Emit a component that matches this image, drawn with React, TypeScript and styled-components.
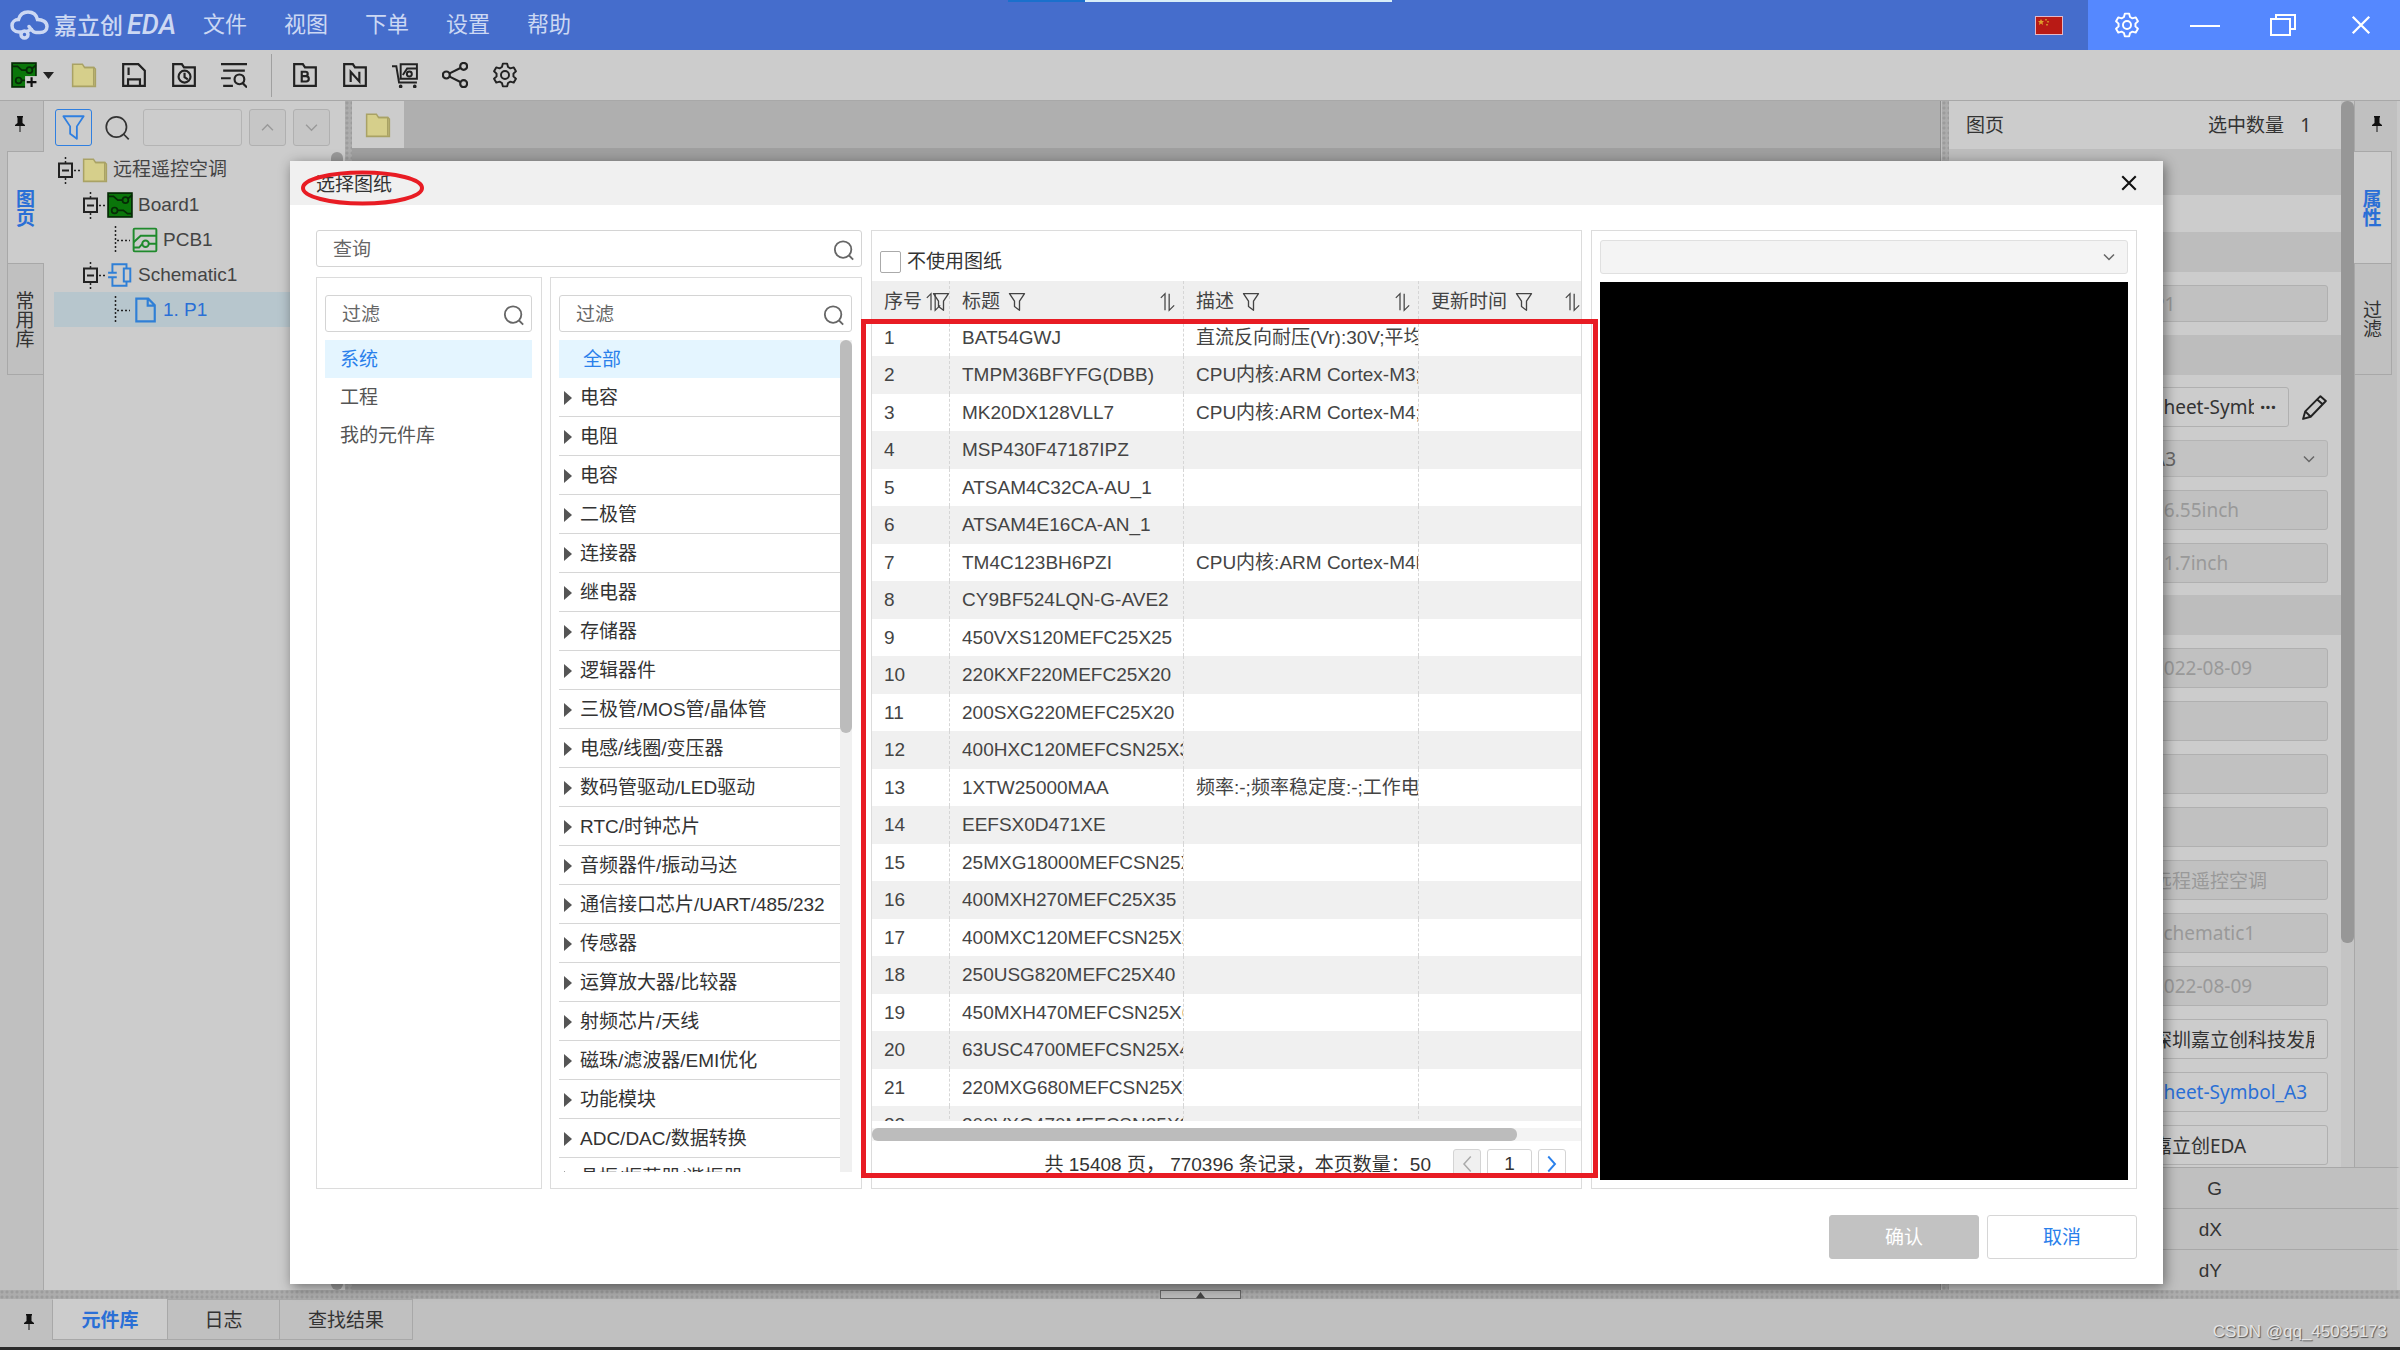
import React from "react";
import styled, { createGlobalStyle, css } from "styled-components";

const SANS = '"Liberation Sans", "Noto Sans CJK SC", sans-serif';
const UI = '"Noto Sans", "Noto Sans CJK SC", sans-serif';
const BLUE = "#2a6fd6";
const LINE = "#a8a8a8";

const GlobalStyle = createGlobalStyle`
  * { box-sizing: border-box; }
  html, body { margin: 0; height: 100%; overflow: hidden; }
  #root { height: 100%; }
  body { font-family: ${SANS}; font-size: 19px; line-height: 24px; color: #333; background: #c0c0c0; }
  button, input, select { font: inherit; color: inherit; margin: 0; padding: 0; border: 0; background: none; border-radius: 0; }
  button { cursor: pointer; }
  svg { display: block; flex: none; }
`;

/* ---------- shell ---------- */
const Shell = styled.div`
  position: relative;
  display: flex;
  flex-direction: column;
  height: 100vh;
`;
const TitleBar = styled.header`
  position: relative;
  display: flex;
  height: 50px;
  background: #456dcc;
  color: #ccd8f3;
`;
const Brand = styled.div`
  display: flex;
  align-items: center;
  gap: 5px;
  padding-left: 10px;
  width: 203px;
  font-size: 23px;
  font-weight: 500;
  font-family: "Noto Sans CJK SC", sans-serif;
`;
const BrandLatin = styled.span`
  font: italic 500 27px Roboto, sans-serif;
  margin-left: 4px;
`;
const Menu = styled.nav`
  display: flex;
  align-items: center;
  gap: 37px;
  flex: 1;
  font-size: 22px;
`;
const WindowControls = styled.div`
  display: flex;
  width: 312px;
  background: #5588ff;
  color: #fff;
`;
const WindowButton = styled.button`
  flex: 1;
  display: grid;
  place-items: center;
`;
const LangButton = styled.button`
  display: grid;
  place-items: center;
  width: 28px;
  margin-right: 25px;
`;
const TopStrip = styled.div`
  position: absolute;
  top: 0;
  left: 42%;
  right: 42%;
  height: 2px;
  display: flex;
`;
const StripPart = styled.span<{ $grow: number; $color: string }>`
  flex: ${(p) => p.$grow};
  background: ${(p) => p.$color};
`;
const ToolBar = styled.div`
  display: flex;
  align-items: center;
  height: 51px;
  padding-left: 11px;
  background: #ccc;
  border-bottom: 1px solid ${LINE};
`;
const ToolButton = styled.button<{ $wide?: boolean }>`
  display: flex;
  align-items: center;
  gap: 6px;
  width: ${(p) => (p.$wide ? 60 : 50)}px;
  height: 40px;
  color: #222;
`;
const ToolDivider = styled.span`
  width: 1px;
  height: 43px;
  margin-right: 20px;
  background: #a0a0a0;
`;
const Main = styled.div`
  display: flex;
  flex: 1;
  min-height: 0;
`;

/* ---------- side strips ---------- */
const Strip = styled.div<{ $side: "left" | "right" }>`
  display: flex;
  flex-direction: column;
  background: #c0c0c0;
  ${(p) =>
    p.$side === "left"
      ? css`width: 44px; border-right: 1px solid ${LINE};`
      : css`width: 46px; border-left: 1px solid ${LINE}; border-right: 3px solid #c9c9c9;`}
`;
const PinButton = styled.button<{ $w?: number }>`
  display: grid;
  place-items: center;
  height: 50px;
  width: ${(p) => p.$w ?? 40}px;
  padding-bottom: 4px;
`;
const SideTab = styled.button<{ $active?: boolean; $side: "left" | "right" }>`
  display: flex;
  align-items: center;
  justify-content: center;
  writing-mode: vertical-rl;
  height: 112px;
  padding-right: 5px;
  border: 1px solid ${LINE};
  border-bottom-width: 0;
  line-height: 19px;
  ${(p) =>
    p.$side === "left"
      ? css`margin: 0 -1px 0 7px; border-right-width: ${p.$active ? 0 : 1}px;`
      : css`margin: 0 5px 0 -1px; border-left-width: ${p.$active ? 0 : 1}px;`}
  ${(p) => p.$active && css`background: #ccc; color: ${BLUE}; font-weight: 700;`}
  &:last-of-type { border-bottom-width: 1px; }
`;

/* ---------- project tree ---------- */
const Project = styled.aside`
  width: 301px;
  background: #ccc;
  display: flex;
  flex-direction: column;
`;
const ProjectTools = styled.div`
  display: flex;
  align-items: center;
  gap: 7px;
  padding: 8px 15px 6px 11px;
`;
const SquareButton = styled.button<{ $active?: boolean }>`
  display: grid;
  place-items: center;
  width: 37px;
  height: 37px;
  border: 1px solid ${(p) => (p.$active ? "#2f7fe0" : "#b0b0b0")};
  border-radius: 3px;
  color: ${(p) => (p.$active ? "#2f7fe0" : "#999")};
  background: ${(p) => (p.$active ? "none" : "#c6c6c6")};
`;
const FindIcon = styled.span`
  padding: 0 5px;
`;
const FindInput = styled.input`
  flex: 1;
  min-width: 0;
  height: 37px;
  border: 1px solid #b4b4b4;
  border-radius: 3px;
`;
const TreeWrap = styled.div`
  display: flex;
  flex: 1;
  min-height: 0;
`;
const Tree = styled.ul`
  list-style: none;
  margin: 0;
  padding: 0 0 0 10px;
  flex: 1;
`;
const TreeRow = styled.li<{ $level: number; $selected?: boolean }>`
  display: flex;
  align-items: center;
  height: 35px;
  padding-left: ${(p) => 4 + p.$level * 25}px;
  color: ${(p) => (p.$selected ? BLUE : "#444")};
  background: ${(p) => (p.$selected ? "#b7c6cd" : "none")};
`;
const TreeLabel = styled.span`
  margin-left: 5px;
`;
const Thumb = styled.span<{ $color: string }>`
  display: block;
  background: ${(p) => p.$color};
  border-radius: 6px;
`;
const TreeThumb = styled(Thumb)`
  width: 12px;
  margin-right: 2px;
`;
const Splitter = styled.div<{ $vertical?: boolean }>`
  background-color: #acacac;
  background-image: radial-gradient(circle at 2px 2px, #9c9c9c 1px, transparent 2px);
  background-size: 5px 5px;
  ${(p) => (p.$vertical ? css`width: 7px;` : css`height: 9px;`)}
  flex: none;
`;

/* ---------- canvas ---------- */
const Canvas = styled.section`
  flex: 1;
  background: #9f9f9f;
  border-right: 1px solid #8d8d8d;
  margin-right: 1px;
`;
const CanvasTabs = styled.div`
  height: 47px;
  background: #afafaf;
  display: flex;
`;
const CanvasTab = styled.button`
  width: 52px;
  background: #ccc;
  display: grid;
  place-items: center;
`;

/* ---------- properties ---------- */
const RightArea = styled.aside`
  width: 451px;
  display: flex;
  flex-direction: column;
  font-family: ${UI};
`;
const RightTop = styled.div`
  display: flex;
  flex: 1;
  min-height: 0;
`;
const Props = styled.div`
  flex: 1;
  min-width: 0;
  background: #ccc;
  overflow: hidden;
`;
const PropsHead = styled.div`
  display: flex;
  align-items: center;
  gap: 16px;
  height: 48px;
  padding: 0 30px 0 17px;
`;
const PropsTitle = styled.span`
  flex: 1;
`;
const Band = styled.div<{ $h: number; $light?: boolean }>`
  height: ${(p) => p.$h}px;
  background: ${(p) => (p.$light ? "#ccc" : "#bdbdbd")};
`;
const Fields = styled.div<{ $pad: number }>`
  display: grid;
  grid-template-columns: minmax(0, 1fr);
  gap: 13px;
  padding: ${(p) => p.$pad}px 13px ${(p) => p.$pad}px 190px;
`;
const fieldBox = css`
  width: 100%;
  border: 1px solid #b0b0b0;
  border-radius: 3px;
`;
const Field = styled.input<{ $h?: number; $tone?: "link" | "edit" }>`
  ${fieldBox}
  height: ${(p) => p.$h ?? 40}px;
  padding: 0 13px;
  background: ${(p) => (p.$tone ? "#ccc" : "#c1c1c1")};
  color: ${(p) => (p.$tone === "link" ? BLUE : p.$tone ? "#333" : "#999")};
`;
const SymbolRow = styled.div`
  display: flex;
  align-items: center;
  gap: 13px;
`;
const SymbolBox = styled.div`
  ${fieldBox}
  flex: 1;
  min-width: 0;
  display: flex;
  height: 40px;
`;
const SymbolInput = styled.input`
  flex: 1;
  min-width: 0;
  margin-left: 13px;
`;
const MoreButton = styled.button`
  width: 34px;
  padding-right: 6px;
  font-weight: 700;
`;
const SelectWrap = styled.label<{ $h: number; $bg: string; $line: string }>`
  display: flex;
  align-items: center;
  height: ${(p) => p.$h}px;
  padding-right: 12px;
  border: 1px solid ${(p) => p.$line};
  border-radius: 3px;
  background: ${(p) => p.$bg};
  color: #666;
`;
const Select = styled.select`
  appearance: none;
  flex: 1;
  min-width: 0;
  height: 100%;
  padding-left: 13px;
  outline: none;
`;
const PropsScroll = styled.div`
  width: 13px;
  background: #c4c4c4;
`;
const PropsThumb = styled(Thumb)`
  height: 79%;
`;
const Status = styled.dl`
  margin: 0;
  font-family: ${SANS};
`;
const StatusRow = styled.div`
  display: flex;
  align-items: center;
  height: 41px;
  padding-top: 1px;
  border-top: 1px solid ${LINE};
  border-right: 3px solid #c9c9c9;
`;
const StatusName = styled.dt`
  width: 273px;
  text-align: right;
`;

/* ---------- bottom ---------- */
const BottomHandle = styled.div`
  display: grid;
  place-items: center;
  width: 81px;
  height: 9px;
  margin: 0 auto;
  background: #bbb;
  border: 1px solid #666;
`;
const BottomBar = styled.footer`
  display: flex;
  align-items: flex-start;
  height: 51px;
  background: #c0c0c0;
  border-bottom: 3px solid #2b2b2b;
`;
const BottomPin = styled.div`
  display: flex;
  justify-content: flex-end;
  width: 52px;
  padding-right: 3px;
  height: 44px;
`;
const BottomTab = styled.button<{ $active?: boolean; $w: number }>`
  width: ${(p) => p.$w}px;
  height: 41px;
  padding-top: 3px;
  border: 1px solid ${LINE};
  border-right-width: 0;
  &:last-of-type { border-right-width: 1px; }
  ${(p) => p.$active && css`background: #ccc; color: ${BLUE}; font-weight: 700; border-top-color: #ccc;`}
`;
const Watermark = styled.span`
  margin: 21px 13px 0 auto;
  font-size: 17px;
  color: #e4e4e4;
  text-shadow: 1px 1px 1px #555;
`;

/* ---------- dialog ---------- */
const Overlay = styled.div`
  position: absolute;
  inset: 0;
  display: flex;
  padding: 161px 237px 66px 290px;
`;
const Dialog = styled.section`
  display: flex;
  flex-direction: column;
  flex: 1;
  min-width: 0;
  background: #fff;
  box-shadow: 2px 3px 12px rgba(0, 0, 0, 0.45);
`;
const DialogHead = styled.div`
  display: flex;
  align-items: center;
  justify-content: space-between;
  height: 44px;
  flex: none;
  padding: 0 20px 0 26px;
  background: #f0f0f0;
`;
const DialogTitle = styled.h2`
  position: relative;
  margin: 0;
  padding-top: 4px;
  font-size: 19px;
  font-weight: 400;
`;
const TitleMark = styled.svg`
  position: absolute;
  left: -15px;
  top: 1px;
`;
const CloseButton = styled.button`
  display: grid;
  place-items: center;
  width: 28px;
  height: 28px;
  color: #111;
`;
const DialogBody = styled.div`
  display: grid;
  grid-template-columns: 546fr 711fr 546fr;
  gap: 9px;
  flex: 1;
  min-height: 0;
  padding: 25px 26px 0;
`;
const Column = styled.div`
  display: flex;
  flex-direction: column;
  gap: 10px;
  min-width: 0;
  min-height: 0;
`;
const SearchBox = styled.label`
  display: flex;
  align-items: center;
  flex: none;
  height: 37px;
  padding: 2px 6px 0 16px;
  border: 1px solid #d4d4d4;
  border-radius: 3px;
  color: #666;
`;
const SearchInput = styled.input`
  flex: 1;
  min-width: 0;
  outline: none;
  &::placeholder { color: #666; opacity: 1; }
`;
const Libraries = styled.div`
  display: grid;
  grid-template-columns: 226fr 312fr;
  gap: 8px;
  flex: 1;
  min-height: 0;
`;
const Panel = styled.div<{ $pad?: string }>`
  position: relative;
  display: flex;
  flex-direction: column;
  min-width: 0;
  min-height: 0;
  padding: ${(p) => p.$pad ?? "0"};
  border: 1px solid #dcdcdc;
`;
const PlainList = styled.ul`
  list-style: none;
  margin: 8px 0 0;
  padding: 0;
`;
const LibraryItem = styled.li<{ $active?: boolean }>`
  height: 38px;
  padding-left: 15px;
  line-height: 39px;
  color: ${(p) => (p.$active ? "#2a80eb" : "#555")};
  background: ${(p) => (p.$active ? "#e4f5ff" : "none")};
`;
const CategoryArea = styled.div`
  display: flex;
  flex: 1;
  min-height: 0;
  margin-top: 8px;
  overflow: hidden;
`;
const CategoryList = styled.ul`
  list-style: none;
  margin: 0;
  padding: 0;
  flex: 1;
  min-width: 0;
`;
const AllItem = styled(LibraryItem)`
  padding-left: 24px;
`;
const CategoryItem = styled.li`
  display: flex;
  align-items: center;
  gap: 8px;
  height: 39px;
  padding: 2px 0 0 5px;
  border-bottom: 1px solid #d6d6d6;
  white-space: nowrap;
`;
const CategoryScroll = styled.div`
  width: 12px;
  background: #f0f0f0;
`;
const CategoryThumb = styled(Thumb)`
  height: 393px;
`;
const NoSheet = styled.label`
  display: flex;
  align-items: center;
  gap: 6px;
  height: 50px;
  padding: 11px 0 0 8px;
  flex: none;
`;
const CheckBox = styled.input`
  appearance: none;
  width: 21px;
  height: 22px;
  background: #fff;
  border: 1px solid #aaa;
  border-radius: 2px;
`;
const TableArea = styled.div`
  flex: 1;
  min-height: 0;
  overflow: hidden;
`;
const Table = styled.table`
  width: 100%;
  table-layout: fixed;
  border-collapse: separate;
  border-spacing: 0;
  color: #444;
`;
const Th = styled.th<{ $w?: number }>`
  width: ${(p) => (p.$w ? `${p.$w}px` : "auto")};
  height: 38px;
  padding: 4px 0 0;
  font-weight: 400;
  background: #efefef;
  & + & { border-left: 1px dashed #d6d6d6; }
`;
const ThInner = styled.div<{ $tight?: boolean }>`
  display: flex;
  align-items: center;
  gap: ${(p) => (p.$tight ? 4 : 7)}px;
  padding-left: 12px;
  padding-right: ${(p) => (p.$tight ? 0 : 8)}px;
  white-space: nowrap;
`;
const SortSlot = styled.span<{ $edge?: boolean }>`
  margin-left: auto;
  margin-right: ${(p) => (p.$edge ? -7 : 0)}px;
`;
const OverlapFilter = styled.span`
  margin-left: -14px;
`;
const Td = styled.td`
  padding: 0 0 0 12px;
  overflow: hidden;
  white-space: nowrap;
  & + & { border-left: 1px dashed #d6d6d6; }
`;
const Tr = styled.tr`
  height: 37px;
  &:nth-child(even) { height: 38px; background: #f0f0f0; }
`;
const TableScroll = styled.div`
  flex: none;
  height: 13px;
  margin-top: 7px;
  background: #f3f3f3;
`;
const TableThumb = styled(Thumb)`
  width: 91%;
  height: 13px;
`;
const Pager = styled.div`
  display: flex;
  align-items: flex-start;
  justify-content: flex-end;
  gap: 6px;
  flex: none;
  height: 35px;
  margin-bottom: 12px;
  padding: 8px 15px 0 0;
  overflow: hidden;
  color: #333;
`;
const PagerText = styled.span`
  padding: 4px 16px 0 0;
`;
const PageButton = styled.button<{ $off?: boolean }>`
  display: grid;
  place-items: center;
  width: 28px;
  height: 30px;
  border: 1px solid #d4d4d4;
  border-radius: 3px;
  color: ${(p) => (p.$off ? "#aaa" : "#2a80eb")};
  background: ${(p) => (p.$off ? "#f0f0f0" : "#fff")};
`;
const PageInput = styled.input`
  width: 45px;
  height: 30px;
  border: 1px solid #d4d4d4;
  border-radius: 3px;
  text-align: center;
`;
const ResultsMark = styled.div`
  position: absolute;
  top: 88px;
  bottom: 10px;
  left: -11px;
  right: -17px;
  border: 5px solid #e81c24;
  pointer-events: none;
  z-index: 1;
`;
const Preview = styled.div`
  flex: 1;
  margin-top: 8px;
  background: #000;
`;
const DialogFoot = styled.div`
  display: flex;
  justify-content: flex-end;
  gap: 8px;
  flex: none;
  padding: 26px 26px 25px;
`;
const FootButton = styled.button<{ $off?: boolean }>`
  width: 150px;
  height: 44px;
  padding-top: 2px;
  border: 1px solid ${(p) => (p.$off ? "#c2c2c2" : "#d6d6d6")};
  border-radius: 3px;
  background: ${(p) => (p.$off ? "#c2c2c2" : "#fff")};
  color: ${(p) => (p.$off ? "#fff" : "#2a80eb")};
`;

/* ---------- icons ---------- */
type IconProps = { size?: number; w?: number; sw?: number; color?: string; children: React.ReactNode };
const Icon = ({ size = 26, w, sw = 2, color = "currentColor", children }: IconProps) => (
  <svg width={w ?? size} height={size} viewBox={`0 0 ${w ? (24 * w) / size : 24} 24`} fill="none" stroke={color} strokeWidth={sw} aria-hidden="true">
    {children}
  </svg>
);
const Search = ({ size = 22, sw = 2 }: { size?: number; sw?: number }) => (
  <Icon size={size} sw={sw}><circle cx="11" cy="11.500" r="9" /><path d="M17.500 18L22 22.500" /></Icon>
);
const FolderFill = ({ size = 26 }: { size?: number }) => (
  <Icon size={size} sw={1.4} color="#a9a265">
    <path d="M1.500 22.500V2h9l2 3H21l1.500 1.500v16z" fill="#d6cf8b" />
    <path d="M12.500 5H21v17" />
  </Icon>
);
const FolderLine = ({ children }: { children: React.ReactNode }) => (
  <Icon><path d="M2 22V2h8l2 3h10v17z" />{children}</Icon>
);
const Gear = ({ size = 26 }: { size?: number }) => (
  <Icon size={size} sw={1.800}>
    <path strokeLinejoin="round" d="M10 1.500h4l.8 3.100 2.200 1.300 3.100-.9 2 3.500-2.300 2.200v2.600l2.300 2.200-2 3.500-3.100-.9-2.200 1.300-.8 3.100h-4l-.8-3.100L7 18.100l-3.100.9-2-3.500 2.300-2.200v-2.600L1.900 8.500l2-3.500 3.100.9 2.200-1.300z" />
    <circle cx="12" cy="12" r="3.700" />
  </Icon>
);
const BoardArt = ({ plus }: { plus?: boolean }) => (
  <Icon sw={1.600} color="#062b06">
    <rect x="1" y="1" width="22" height="22" fill="#0a760a" />
    <path d="M1 4h5l4 3.500h4M23 20h-4l-4-3h-5M19.500 6L23 3" />
    <circle cx="17" cy="7.500" r="2.700" />
    <circle cx="7" cy="17" r="2.700" />
    {plus && <><rect x="13" y="13" width="12" height="12" fill="#ccc" stroke="none" /><path d="M19 14v9M14.500 18.500h9" strokeWidth="2" stroke="#111" /></>}
  </Icon>
);
const Pin = () => (
  <svg width="12" height="16" viewBox="0 0 12 16" aria-hidden="true">
    <path d="M3 0h6v1.500H8.500V7L11 9v1H1V9l2.500-2V1.500H3zM5.500 10h1v6h-1z" fill="#111" />
  </svg>
);
const Filter = ({ size = 20, sw = 2 }: { size?: number; sw?: number }) => (
  <Icon size={size} sw={sw}><path d="M3 2h18l-6 9v11l-6-4.500V11z" strokeLinejoin="round" /></Icon>
);
const Sort = () => (
  <Icon size={20} w={15} sw={1.500}><path d="M1 7L6 2v20M11 2v20l6-6" /></Icon>
);
const Chevron = ({ dir = "down", size = 12, sw = 3 }: { dir?: string; size?: number; sw?: number }) => {
  const d: Record<string, string> = { down: "M2 7l10 10L22 7", up: "M2 17L12 7l10 10", left: "M17 2L8 12l9 10", right: "M7 2l9 10-9 10" };
  return <Icon size={size} sw={sw}><path d={d[dir]} /></Icon>;
};
const Expander = () => (
  <svg width="24" height="34" viewBox="0 0 24 34" fill="none" stroke="#222" aria-hidden="true">
    <path d="M7.500 4v6M7.500 25v6M16 17.500h7" strokeDasharray="2 2" strokeWidth="1.500" />
    <rect x="1" y="10.500" width="13" height="13.500" strokeWidth="2" />
    <path d="M4 17.500h7" strokeWidth="2" />
  </svg>
);
const Tee = () => (
  <svg width="24" height="34" viewBox="0 0 24 34" fill="none" stroke="#222" strokeWidth="1.500" strokeDasharray="2 2" aria-hidden="true">
    <path d="M7.500 3v27M9 17.500h13" />
  </svg>
);
const PcbIcon = () => (
  <Icon color="#1f8a2c" sw={1.800}>
    <rect x="1.500" y="1.500" width="21" height="21" rx="1" />
    <path d="M1.500 14L8 8h14.500M15.500 15.500h7M1.500 19h5l3-3.500" /><circle cx="12.500" cy="15.500" r="3" />
  </Icon>
);
const SchematicIcon = () => (
  <Icon color="#2f7fd6" sw={1.800}>
    <path d="M5 8V2h13v4M5 16v6h13v-4M1 10h8M1 14h8M5 8v2M5 14v2" /><rect x="15.500" y="6" width="6" height="12" />
  </Icon>
);
const PageIcon = () => (
  <Icon color="#2f7fd6" sw={2}><path d="M4 1.500h11l6 6v15H4zM14.500 1.500V8H21" /></Icon>
);

/* ---------- data ---------- */
const categories = [
  "电容", "电阻", "电容", "二极管", "连接器", "继电器", "存储器", "逻辑器件", "三极管/MOS管/晶体管", "电感/线圈/变压器",
  "数码管驱动/LED驱动", "RTC/时钟芯片", "音频器件/振动马达", "通信接口芯片/UART/485/232", "传感器", "运算放大器/比较器",
  "射频芯片/天线", "磁珠/滤波器/EMI优化", "功能模块", "ADC/DAC/数据转换", "晶振/振荡器/谐振器",
];
const parts: [string, string][] = [
  ["BAT54GWJ", "直流反向耐压(Vr):30V;平均整流电流"], ["TMPM36BFYFG(DBB)", "CPU内核:ARM Cortex-M3;"],
  ["MK20DX128VLL7", "CPU内核:ARM Cortex-M4;"], ["MSP430F47187IPZ", ""], ["ATSAM4C32CA-AU_1", ""], ["ATSAM4E16CA-AN_1", ""],
  ["TM4C123BH6PZI", "CPU内核:ARM Cortex-M4F"], ["CY9BF524LQN-G-AVE2", ""], ["450VXS120MEFC25X25", ""], ["220KXF220MEFC25X20", ""],
  ["200SXG220MEFC25X20", ""], ["400HXC120MEFCSN25X30", ""], ["1XTW25000MAA", "频率:-;频率稳定度:-;工作电压"], ["EEFSX0D471XE", ""],
  ["25MXG18000MEFCSN25X50", ""], ["400MXH270MEFC25X35", ""], ["400MXC120MEFCSN25X25", ""], ["250USG820MEFC25X40", ""],
  ["450MXH470MEFCSN25X60", ""], ["63USC4700MEFCSN25X40", ""], ["220MXG680MEFCSN25X35", ""], ["200VXG470MEFCSN25X25", ""],
];
const sheetFields: { name: string; value: string; tone?: "link" | "edit" }[] = [
  { name: "创建日期", value: "2022-08-09" }, { name: "绘制", value: "" }, { name: "审阅", value: "" }, { name: "版本", value: "" },
  { name: "工程名", value: "远程遥控空调" }, { name: "原理图名", value: "Schematic1" }, { name: "更新日期", value: "2022-08-09" },
  { name: "公司", value: "深圳嘉立创科技发展有限公司", tone: "edit" }, { name: "图纸", value: "Sheet-Symbol_A3", tone: "link" },
  { name: "品牌", value: "嘉立创EDA", tone: "edit" },
];

const TopBar = () => (
  <TitleBar>
    <Brand>
      <svg width="39" height="30" viewBox="0 0 39 30" fill="none" stroke="currentColor" strokeWidth="3.500" strokeLinecap="round" aria-hidden="true">
        <path d="M11 22H9C4 22 2 18.500 2 15.500 2 12 5 9.500 8.500 9.500 10 4 14 2 18 2c5 0 8.500 3 9.500 7.500 5 0 9.500 2.500 9.500 7 0 4-3 6-7 6h-4c-3 0-5-3-7-6" />
        <circle cx="14.500" cy="24.500" r="3.500" /><path d="M16.500 21.500l5-2" />
      </svg>
      <span>嘉立创<BrandLatin>EDA</BrandLatin></span>
    </Brand>
    <Menu>{["文件", "视图", "下单", "设置", "帮助"].map((m) => <button key={m}>{m}</button>)}</Menu>
    <LangButton aria-label="语言">
      <svg width="28" height="19" viewBox="0 0 28 19" aria-hidden="true">
        <rect x=".5" y=".5" width="27" height="18" fill="#b81a15" stroke="#e3b9c8" />
        <path d="M6 3l1 2h2L7.500 6.500 8 9 6 7.500 4 9l.5-2.500L3 5h2z" fill="#e0a02c" />
        <path d="M10 3h2v1.500h-2zM12 5h2v1.500h-2zM11 8h2v1.500h-2z" fill="#cf8425" />
      </svg>
    </LangButton>
    <WindowControls>
      <WindowButton aria-label="设置"><Gear /></WindowButton>
      <WindowButton aria-label="最小化"><svg width="30" height="3"><rect width="30" height="2" y="1" fill="#fff" /></svg></WindowButton>
      <WindowButton aria-label="还原">
        <svg width="28" height="24" viewBox="0 0 28 24" fill="none" stroke="#fff" strokeWidth="2"><rect x="2" y="6" width="19" height="16" /><path d="M7 6V2h19v14h-5" /></svg>
      </WindowButton>
      <WindowButton aria-label="关闭"><Icon size={22} sw={2.500}><path d="M3 3l18 18M21 3L3 21" /></Icon></WindowButton>
    </WindowControls>
    <TopStrip><StripPart $grow={76} $color="#1a70cc" /><StripPart $grow={302} $color="#d8eef8" /></TopStrip>
  </TitleBar>
);

const Tools = () => (
  <ToolBar>
    <ToolButton $wide aria-label="新建"><BoardArt plus /><svg width="11" height="7"><path d="M0 0h11L5.500 7z" fill="#222" /></svg></ToolButton>
    <ToolButton aria-label="打开"><FolderFill /></ToolButton>
    <ToolButton aria-label="保存"><Icon><path d="M2 22V2h14l6 6v14zM7 5v7M6.500 22v-6h11v6" /></Icon></ToolButton>
    <ToolButton aria-label="最近"><FolderLine><circle cx="12.500" cy="13.500" r="5.500" /><path d="M12.500 10v4l3 2" /></FolderLine></ToolButton>
    <ToolButton aria-label="查找"><Icon><path d="M0 2h24M2 8h20M0 15h9M2 22h9" /><circle cx="17" cy="16" r="4.500" /><path d="M20 19.500l4 4" /></Icon></ToolButton>
    <ToolDivider />
    <ToolButton aria-label="BOM"><FolderLine><path d="M9 9v9h4a2.500 2.500 0 000-5H9h3.500a2 2 0 000-4z" /></FolderLine></ToolButton>
    <ToolButton aria-label="网表"><FolderLine><path d="M8 18.500V9l8 9V9" /></FolderLine></ToolButton>
    <ToolButton aria-label="下单"><Icon sw={1.800}><path d="M0 4h4l2.500 15H23M7 15.500h16V2H8v13M10 12l4-6h9" /><circle cx="16" cy="11" r="2.300" /><circle cx="8" cy="22.500" r=".8" /><circle cx="21" cy="22.500" r=".8" /></Icon></ToolButton>
    <ToolButton aria-label="分享"><Icon><circle cx="4" cy="12" r="3.200" /><circle cx="20" cy="4" r="3.200" /><circle cx="20" cy="20" r="3.200" /><path d="M7 10.500l10-5M7 13.500l10 5" /></Icon></ToolButton>
    <ToolButton aria-label="选项"><Gear /></ToolButton>
  </ToolBar>
);

const ProjectPanel = () => (
  <Project>
    <ProjectTools>
      <SquareButton $active aria-label="筛选"><Filter size={27} sw={1.600} /></SquareButton>
      <FindIcon><Search size={27} sw={1.500} /></FindIcon>
      <FindInput aria-label="查找" />
      <SquareButton aria-label="上一个"><Chevron dir="up" size={13} sw={2.500} /></SquareButton>
      <SquareButton aria-label="下一个"><Chevron size={13} sw={2.500} /></SquareButton>
    </ProjectTools>
    <TreeWrap>
      <Tree>
        <TreeRow $level={0}><Expander /><FolderFill /><TreeLabel>远程遥控空调</TreeLabel></TreeRow>
        <TreeRow $level={1}><Expander /><BoardArt /><TreeLabel>Board1</TreeLabel></TreeRow>
        <TreeRow $level={2}><Tee /><PcbIcon /><TreeLabel>PCB1</TreeLabel></TreeRow>
        <TreeRow $level={1}><Expander /><SchematicIcon /><TreeLabel>Schematic1</TreeLabel></TreeRow>
        <TreeRow $level={2} $selected><Tee /><PageIcon /><TreeLabel>1. P1</TreeLabel></TreeRow>
      </Tree>
      <TreeThumb $color="#999" />
    </TreeWrap>
  </Project>
);

const PropertyPanel = () => (
  <RightArea>
    <RightTop>
      <Props>
        <PropsHead><PropsTitle>图页</PropsTitle><span>选中数量</span><span>1</span></PropsHead>
        <Band $h={46} /><Band $h={37} $light /><Band $h={40} />
        <Fields $pad={13}><Field $h={37} aria-label="名称" defaultValue="P1" /></Fields>
        <Band $h={40} />
        <Fields $pad={12}>
          <SymbolRow>
            <SymbolBox><SymbolInput aria-label="图纸符号" defaultValue="Sheet-Symbol_A3" /><MoreButton aria-label="选择图纸">···</MoreButton></SymbolBox>
            <Icon size={26} color="#222" sw={1.800}><path d="M1 23l2-7L17 2l5 4.500L8 21zM3 16l5 5M14 5l5 4.500" strokeLinejoin="round" /></Icon>
          </SymbolRow>
          <SelectWrap $h={37} $bg="#c3c3c3" $line="#b4b4b4"><Select aria-label="图纸尺寸"><option>A3</option></Select><Chevron /></SelectWrap>
          <Field aria-label="宽度" defaultValue="16.55inch" />
          <Field aria-label="高度" defaultValue="11.7inch" />
        </Fields>
        <Band $h={40} />
        <Fields $pad={13}>
          {sheetFields.map((f, i) => <Field key={i} aria-label={f.name} defaultValue={f.value} $tone={f.tone} />)}
        </Fields>
      </Props>
      <PropsScroll><PropsThumb $color="#979797" /></PropsScroll>
      <Strip $side="right">
        <PinButton $w={44} aria-label="固定"><Pin /></PinButton>
        <SideTab $side="right" $active>属性</SideTab>
        <SideTab $side="right">过滤</SideTab>
      </Strip>
    </RightTop>
    <Status>{["G", "dX", "dY"].map((s) => <StatusRow key={s}><StatusName>{s}</StatusName></StatusRow>)}</Status>
  </RightArea>
);

const Results = () => (
  <Panel>
    <NoSheet><CheckBox type="checkbox" />不使用图纸</NoSheet>
    <TableArea>
      <Table>
        <thead>
          <tr>
            <Th $w={77}><ThInner $tight>序号<Sort /><OverlapFilter><Filter size={20} sw={1.600} /></OverlapFilter></ThInner></Th>
            <Th $w={234}><ThInner>标题<Filter size={20} sw={1.600} /><SortSlot><Sort /></SortSlot></ThInner></Th>
            <Th $w={235}><ThInner>描述<Filter size={20} sw={1.600} /><SortSlot><Sort /></SortSlot></ThInner></Th>
            <Th><ThInner>更新时间<Filter size={20} sw={1.600} /><SortSlot $edge><Sort /></SortSlot></ThInner></Th>
          </tr>
        </thead>
        <tbody>
          {parts.map(([title, note], i) => <Tr key={title}><Td>{i + 1}</Td><Td>{title}</Td><Td>{note}</Td><Td /></Tr>)}
        </tbody>
      </Table>
    </TableArea>
    <TableScroll><TableThumb $color="#bcbcbc" /></TableScroll>
    <Pager>
      <PagerText>共 15408 页， 770396 条记录，本页数量：50</PagerText>
      <PageButton $off aria-label="上一页"><Chevron dir="left" size={18} sw={2} /></PageButton>
      <PageInput aria-label="页码" defaultValue="1" />
      <PageButton aria-label="下一页"><Chevron dir="right" size={18} sw={2.500} /></PageButton>
    </Pager>
    <ResultsMark />
  </Panel>
);

const SheetDialog = () => (
  <Overlay>
    <Dialog role="dialog" aria-label="选择图纸">
      <DialogHead>
        <DialogTitle>
          选择图纸
          <TitleMark width="123" height="36" viewBox="0 0 123 36" aria-hidden="true">
            <ellipse cx="61.500" cy="18" rx="59.500" ry="15.500" fill="none" stroke="#e81c24" strokeWidth="4" />
          </TitleMark>
        </DialogTitle>
        <CloseButton aria-label="关闭"><Icon size={18} sw={2.800}><path d="M3 3l18 18M21 3L3 21" /></Icon></CloseButton>
      </DialogHead>
      <DialogBody>
        <Column>
          <SearchBox><SearchInput placeholder="查询" aria-label="查询" /><Search /></SearchBox>
          <Libraries>
            <Panel $pad="17px 9px 0 8px">
              <SearchBox><SearchInput placeholder="过滤" aria-label="过滤库" /><Search /></SearchBox>
              <PlainList>
                <LibraryItem $active>系统</LibraryItem>
                <LibraryItem>工程</LibraryItem>
                <LibraryItem>我的元件库</LibraryItem>
              </PlainList>
            </Panel>
            <Panel $pad="17px 9px 16px 8px">
              <SearchBox><SearchInput placeholder="过滤" aria-label="过滤分类" /><Search /></SearchBox>
              <CategoryArea>
                <CategoryList>
                  <AllItem $active>全部</AllItem>
                  {categories.map((c, i) => (
                    <CategoryItem key={i}><svg width="8" height="14"><path d="M0 0l8 7-8 7z" fill="#555" /></svg>{c}</CategoryItem>
                  ))}
                </CategoryList>
                <CategoryScroll><CategoryThumb $color="#bcbcbc" /></CategoryScroll>
              </CategoryArea>
            </Panel>
          </Libraries>
        </Column>
        <Results />
        <Panel $pad="9px 8px 8px">
          <SelectWrap $h={34} $bg="#f4f4f4" $line="#e0e0e0"><Select aria-label="预览图页"><option> </option></Select><Chevron /></SelectWrap>
          <Preview />
        </Panel>
      </DialogBody>
      <DialogFoot><FootButton $off>确认</FootButton><FootButton>取消</FootButton></DialogFoot>
    </Dialog>
  </Overlay>
);

export default function App() {
  return (
    <Shell>
      <GlobalStyle />
      <TopBar />
      <Tools />
      <Main>
        <Strip $side="left">
          <PinButton aria-label="固定"><Pin /></PinButton>
          <SideTab $side="left" $active>图页</SideTab>
          <SideTab $side="left">常用库</SideTab>
        </Strip>
        <ProjectPanel />
        <Splitter $vertical />
        <Canvas><CanvasTabs><CanvasTab aria-label="工程"><FolderFill /></CanvasTab></CanvasTabs></Canvas>
        <Splitter $vertical />
        <PropertyPanel />
      </Main>
      <Splitter>
        <BottomHandle><svg width="9" height="6"><path d="M4.500 0L9 6H0z" fill="#444" /></svg></BottomHandle>
      </Splitter>
      <BottomBar>
        <BottomPin><PinButton aria-label="固定"><Pin /></PinButton></BottomPin>
        <BottomTab $w={115} $active>元件库</BottomTab>
        <BottomTab $w={112}>日志</BottomTab>
        <BottomTab $w={134}>查找结果</BottomTab>
        <Watermark>CSDN @qq_45035173</Watermark>
      </BottomBar>
      <SheetDialog />
    </Shell>
  );
}
